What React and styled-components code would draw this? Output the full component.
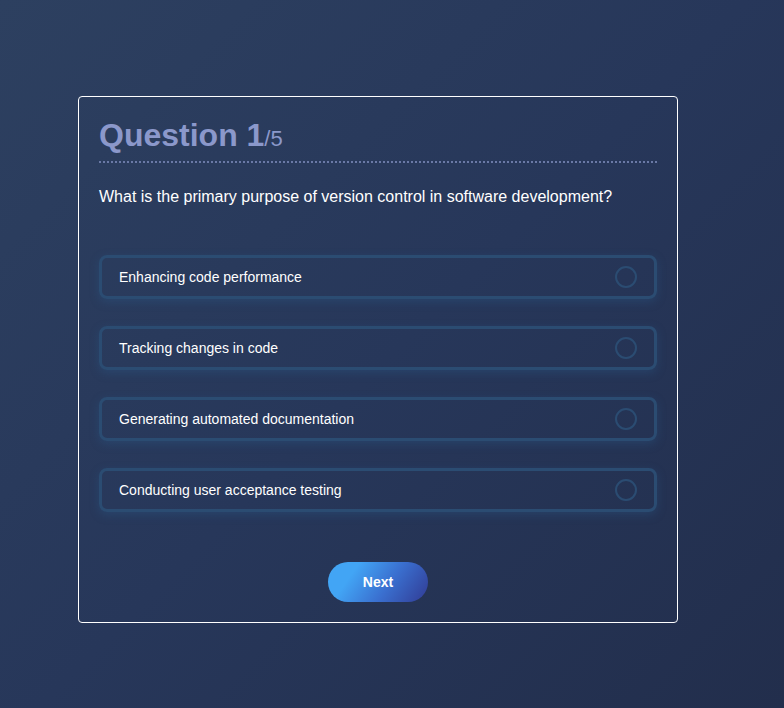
import React, { useState } from 'react';
import styled, { createGlobalStyle } from 'styled-components';

const GlobalStyle = createGlobalStyle`
  html, body {
    margin: 0;
    padding: 0;
  }
  body {
    min-height: 708px;
    background: linear-gradient(135deg, #2d4060 0%, #27375a 50%, #222e4c 100%);
    font-family: "Liberation Sans", Arial, sans-serif;
    color: #fff;
  }
`;

const Page = styled.div`
  padding: 96px 0 0 78px;
`;

const Card = styled.div`
  width: 600px;
  box-sizing: border-box;
  border: 1px solid #ffffff;
  border-radius: 4px;
  padding: 20px;
  display: flex;
  flex-direction: column;
`;

const Header = styled.h2`
  margin: 0;
  padding-bottom: 7px;
  border-bottom: 2px dotted #6a79a6;
  font-size: 32px;
  font-weight: 700;
  color: #8b98cb;
`;

const Total = styled.span`
  font-size: 22px;
  font-weight: 400;
`;

const QuestionText = styled.p`
  margin: 25px 0 0;
  font-size: 16px;
  color: #ffffff;
`;

const Options = styled.ul`
  list-style: none;
  margin: 49px 0 0;
  padding: 0;
  display: flex;
  flex-direction: column;
  gap: 27px;
`;

const Option = styled.li`
  height: 44px;
  box-sizing: border-box;
  border: 3px solid ${(p) => (p.$active ? '#3f86c9' : '#2b4c72')};
  border-radius: 8px;
  padding: 0 17px;
  display: flex;
  align-items: center;
  justify-content: space-between;
  font-size: 14px;
  color: #ffffff;
  cursor: pointer;
  box-shadow: 0 3px 10px rgba(44, 92, 140, 0.35);
`;

const Radio = styled.span`
  width: 22px;
  height: 22px;
  box-sizing: border-box;
  border-radius: 50%;
  border: 2px solid ${(p) => (p.$active ? '#42a5f5' : '#2b4c72')};
  background: ${(p) => (p.$active ? '#42a5f5' : 'transparent')};
`;

const NextButton = styled.button`
  align-self: center;
  margin-top: 50px;
  width: 100px;
  height: 40px;
  border: none;
  border-radius: 20px;
  background: linear-gradient(125deg, #42a5f5 25%, #3a6fcf 60%, #313b94 100%);
  color: #ffffff;
  font-family: "Liberation Sans", Arial, sans-serif;
  font-size: 14px;
  font-weight: 700;
  cursor: pointer;
`;

const options = [
  'Enhancing code performance',
  'Tracking changes in code',
  'Generating automated documentation',
  'Conducting user acceptance testing',
];

export default function App() {
  const [selected, setSelected] = useState(null);

  return (
    <>
      <GlobalStyle />
      <Page>
        <Card>
          <Header>
            Question 1<Total>/5</Total>
          </Header>
          <QuestionText>
            What is the primary purpose of version control in software development?
          </QuestionText>
          <Options>
            {options.map((opt, i) => (
              <Option key={opt} $active={selected === i} onClick={() => setSelected(i)}>
                {opt}
                <Radio $active={selected === i} />
              </Option>
            ))}
          </Options>
          <NextButton>Next</NextButton>
        </Card>
      </Page>
    </>
  );
}
